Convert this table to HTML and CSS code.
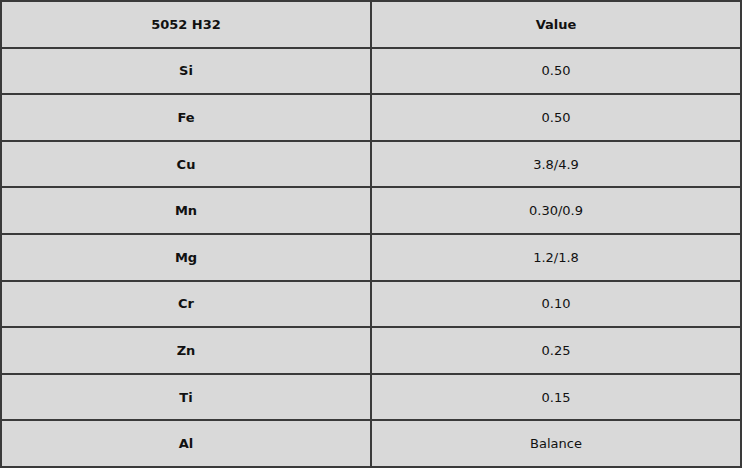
FILE: index.html
```html
<!DOCTYPE html>
<html>
<head>
<meta charset="utf-8">
<link rel="stylesheet" href="styles.css">
</head>
<body>
<table class="spec">
  <thead>
    <tr><th>5052 H32</th><th>Value</th></tr>
  </thead>
  <tbody>
    <tr><th>Si</th><td>0.50</td></tr>
    <tr><th>Fe</th><td>0.50</td></tr>
    <tr><th>Cu</th><td>3.8/4.9</td></tr>
    <tr><th>Mn</th><td>0.30/0.9</td></tr>
    <tr><th>Mg</th><td>1.2/1.8</td></tr>
    <tr><th>Cr</th><td>0.10</td></tr>
    <tr><th>Zn</th><td>0.25</td></tr>
    <tr><th>Ti</th><td>0.15</td></tr>
    <tr><th>Al</th><td>Balance</td></tr>
  </tbody>
</table>
</body>
</html>
```
FILE: styles.css
```css
html, body {
  margin: 0;
  padding: 0;
  background: #ffffff;
}
.spec {
  width: 742px;
  border-collapse: separate;
  border-spacing: 0;
  border-top: 2px solid #3a3a3a;
  border-left: 2px solid #3a3a3a;
  background: #d9d9d9;
  font-family: "DejaVu Sans", Verdana, sans-serif;
  font-size: 13px;
  color: #111;
  table-layout: fixed;
}
.spec th, .spec td {
  border-right: 2px solid #3a3a3a;
  border-bottom: 2px solid #3a3a3a;
  text-align: center;
  vertical-align: middle;
  height: 44.6px;
  padding: 0;
  width: 50%;
}
.spec th {
  font-weight: bold;
}
.spec td {
  font-weight: normal;
}
```
